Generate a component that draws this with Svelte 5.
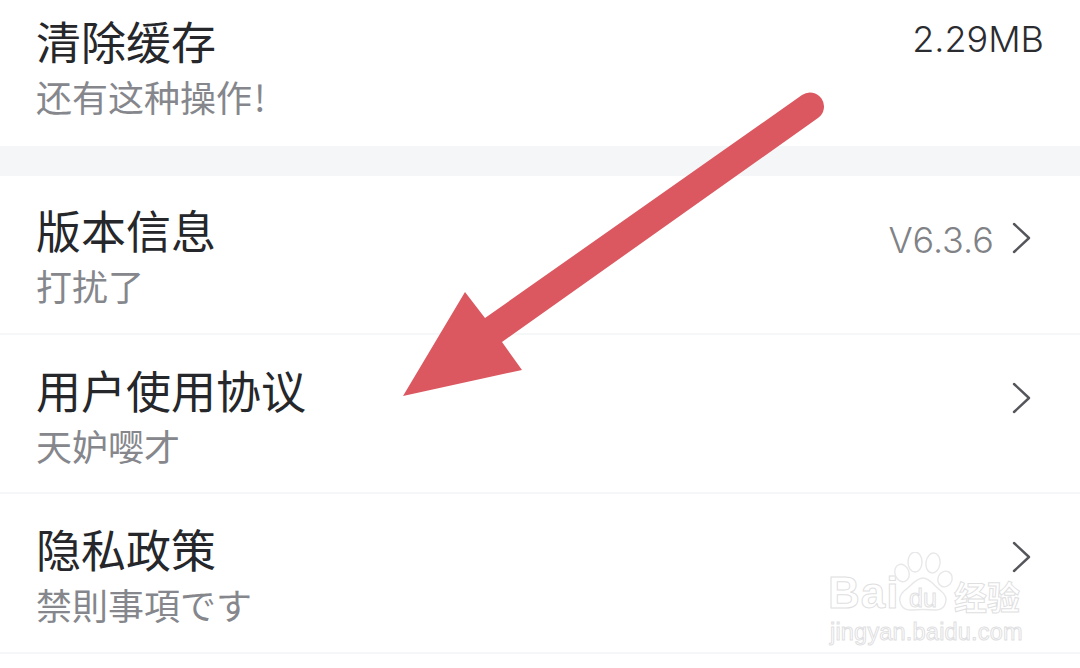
<script lang="ts">
  const rows = [
    { title: "版本信息", sub: "打扰了", value: "V6.3.6" },
    { title: "用户使用协议", sub: "天妒嘤才" },
    { title: "隐私政策", sub: "禁則事項です" },
  ];
</script>

<main class="page">
  <section class="row first">
    <div class="text">
      <div class="title">清除缓存</div>
      <div class="sub">还有这种操作<span class="bang">!</span></div>
    </div>
    <span class="size">2.29MB</span>
  </section>
  <div class="gap"></div>
  {#each rows as r}
    <section class="row">
      <div class="text">
        <div class="title">{r.title}</div>
        <div class="sub">{r.sub}</div>
      </div>
      <div class="right">
        {#if r.value}<span class="value">{r.value}</span>{/if}
        <svg class="chev" width="20" height="32" viewBox="0 0 20 32" fill="none">
          <path d="M2 2 L17 16 L2 30" stroke="#55565b" stroke-width="2.4" stroke-linecap="round" stroke-linejoin="round" />
        </svg>
      </div>
    </section>
  {/each}

  <svg class="arrow" width="1080" height="668" viewBox="0 0 1080 668">
    <path d="M403 396 L465 292 L485 318 L802 95 A14 14 0 0 1 818 118 L502 342 L522 370 Z" fill="#dc5860" />
  </svg>

  <div class="mark">
    <div class="brand">
      <span class="bai">Bai</span>
      <svg class="paw" width="66" height="70" viewBox="0 0 66 70" fill="#fff" stroke="#e8e8ea" stroke-width="1.4">
        <ellipse cx="10" cy="21" rx="7" ry="9" transform="rotate(-20 10 21)" />
        <ellipse cx="23" cy="10" rx="7" ry="10" />
        <ellipse cx="41" cy="11" rx="7" ry="10" transform="rotate(8 41 11)" />
        <ellipse cx="53" cy="27" rx="7" ry="8" transform="rotate(25 53 27)" />
        <path d="M31 26 C38 26 42 34 49 39 C58 46 54 59 42 58 C36 57.5 26 57.5 20 58 C8 59 4 46 12 39 C19 34 24 26 31 26 Z" />
      </svg>
      <span class="du">du</span>
      <span class="jy">经验</span>
    </div>
    <div class="url">jingyan.baidu.com</div>
  </div>
</main>

<style>
  :global(body) {
    margin: 0;
    background: #fff;
  }
  .page {
    position: relative;
    width: 1080px;
    height: 668px;
    overflow: hidden;
    background: #fff;
    font-family: "Noto Sans CJK SC", "Noto Sans", sans-serif;
  }
  .row {
    box-sizing: border-box;
    height: 158.5px;
    margin-bottom: 1px;
    padding: 24px 36px 0 36px;
    display: flex;
    justify-content: space-between;
    align-items: flex-start;
    border-bottom: 2px solid #f6f7f8;
  }
  .row.first {
    height: 146px;
    margin-bottom: 0;
    padding-top: 11px;
    border-bottom: 0;
  }
  .gap {
    height: 30px;
    background: #f5f6f8;
  }
  .title {
    font-size: 45px;
    line-height: 60px;
    color: #26272b;
  }
  .sub {
    font-size: 36px;
    line-height: 50px;
    color: #85878c;
  }
  .bang {
    margin-left: 2px;
  }
  .size {
    font-family: Inter, "Liberation Sans", sans-serif;
    font-weight: 350;
    font-size: 36px;
    line-height: 48px;
    margin-top: 4px;
    color: #2b2c30;
  }
  .right {
    display: flex;
    align-items: center;
    gap: 18px;
    height: 40px;
    margin-top: 18px;
    padding-right: 12px;
  }
  .value {
    font-family: Inter, "Liberation Sans", sans-serif;
    font-weight: 350;
    font-size: 36px;
    line-height: 40px;
    margin-top: 3px;
    color: #808286;
  }
  .chev {
    display: block;
  }
  .arrow {
    position: absolute;
    inset: 0;
    pointer-events: none;
  }
  .mark {
    position: absolute;
    left: 828px;
    top: 552px;
    width: 196px;
  }
  .brand {
    position: relative;
    height: 62px;
  }
  .bai, .du, .jy, .url {
    position: absolute;
    color: #fff;
    -webkit-text-stroke: 1px #dfdfe2;
    font-family: "Liberation Sans", "Noto Sans CJK SC", sans-serif;
  }
  .bai {
    left: 0;
    top: 16px;
    font-size: 44px;
    line-height: 50px;
    font-weight: 700;
    letter-spacing: 1px;
  }
  .paw {
    position: absolute;
    left: 64px;
    top: 0;
  }
  .du {
    left: 81px;
    top: 31px;
    font-size: 25px;
    line-height: 30px;
  }
  .jy {
    left: 126px;
    top: 24px;
    font-size: 33px;
    line-height: 40px;
    font-family: "Noto Sans CJK SC", sans-serif;
    font-weight: 700;
  }
  .url {
    left: 2px;
    top: 66px;
    font-size: 23.5px;
    line-height: 28px;
    letter-spacing: 0.2px;
    white-space: nowrap;
  }
</style>
